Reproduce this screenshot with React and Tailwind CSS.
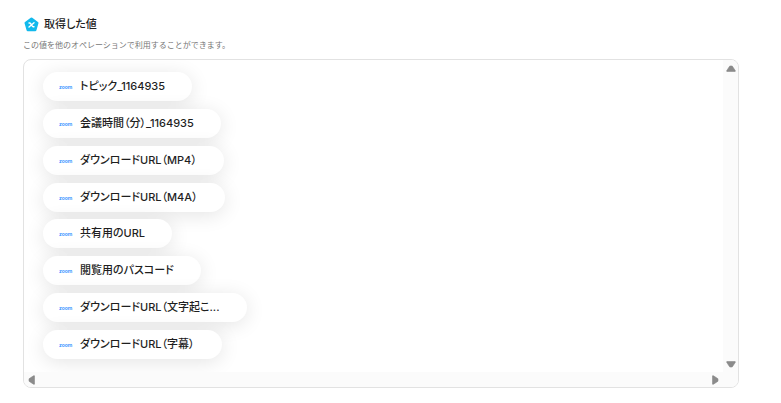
import React from 'react';

const values = [
  'トピック_1164935',
  '会議時間（分）_1164935',
  'ダウンロードURL（MP4）',
  'ダウンロードURL（M4A）',
  '共有用のURL',
  '閲覧用のパスコード',
  'ダウンロードURL（文字起こ...',
  'ダウンロードURL（字幕）',
];

const ValueIcon = () => (
  <svg viewBox="0 0 16 16" className="w-4 h-4" aria-hidden="true">
    <path
      d="M8.5 2.8 L14.2 7 L12.2 14 H4.8 L2.8 7 Z"
      fill="#12b9ec"
      stroke="#12b9ec"
      strokeWidth="2.6"
      strokeLinejoin="round"
    />
    <path
      d="M6 7 H6.8 C8 7 9 10.8 10.2 10.8 H11 M11 6.8 L6 11"
      fill="none"
      stroke="#ffffff"
      strokeWidth="1.4"
      strokeLinecap="round"
    />
  </svg>
);

const ZoomLogo = () => (
  <span className="w-[13px] shrink-0 pt-px text-[5px] leading-[6px] font-semibold text-[#2d8cff]">
    zoom
  </span>
);

const ValuePill = ({ label }) => (
  <button
    type="button"
    className="flex items-center gap-2 h-[29px] pl-4 pr-[27px] rounded-full bg-white shadow-[0_3px_20px_rgba(0,0,0,0.11)]"
  >
    <ZoomLogo />
    <span className="pb-px text-[11px] leading-4 font-medium text-[#1f1f1f] whitespace-nowrap">{label}</span>
  </button>
);

const arrows = {
  up: 'M3.8 2 H6.2 L9.2 6.5 V7.5 H0.8 V6.5 Z',
  down: 'M3.8 8 H6.2 L9.2 3.5 V2.5 H0.8 V3.5 Z',
  left: 'M2 3.8 V6.2 L6.5 9.2 H7.5 V0.8 H6.5 Z',
  right: 'M8 3.8 V6.2 L3.5 9.2 H2.5 V0.8 H3.5 Z',
};

const ScrollArrow = ({ direction, label }) => (
  <button type="button" aria-label={label} className="flex items-center justify-center w-[15px] h-[15px]">
    <svg viewBox="0 0 10 10" className="w-[10px] h-[10px]" aria-hidden="true">
      <path d={arrows[direction]} fill="#8b8b8b" stroke="#8b8b8b" strokeWidth="0.6" strokeLinejoin="round" />
    </svg>
  </button>
);

export default function App() {
  return (
    <main
      className="flex flex-col min-h-screen bg-white pt-4 pb-[15px] pl-[23px] pr-[42px] font-['Inter','Noto_Sans_CJK_JP',sans-serif]"
      lang="ja"
    >
      <header>
        <div className="flex items-center gap-[5px]">
          <ValueIcon />
          <h1 className="text-[11px] leading-4 font-medium text-[#1f1f1f] [font-feature-settings:'palt']">取得した値</h1>
        </div>
        <p className="mt-[7px] text-[8px] leading-3 text-[#777777]">
          この値を他のオペレーションで利用することができます。
        </p>
      </header>

      <section className="mt-2 flex-1 grid grid-cols-[1fr_15px] grid-rows-[1fr_15px] rounded-lg border border-[#e2e2e2] overflow-hidden">
        <ul className="flex flex-col justify-between items-start pl-[19px] pt-3 pb-[13px] overflow-hidden [font-feature-settings:'palt']">
          {values.map((label) => (
            <li key={label}>
              <ValuePill label={label} />
            </li>
          ))}
        </ul>
        <div className="flex flex-col justify-between bg-[#fbfbfb] pt-px pb-px">
          <ScrollArrow direction="up" label="上へスクロール" />
          <ScrollArrow direction="down" label="下へスクロール" />
        </div>
        <div className="flex justify-between bg-[#fbfbfb] pr-px">
          <ScrollArrow direction="left" label="左へスクロール" />
          <ScrollArrow direction="right" label="右へスクロール" />
        </div>
        <div className="bg-[#fbfbfb]" />
      </section>
    </main>
  );
}
